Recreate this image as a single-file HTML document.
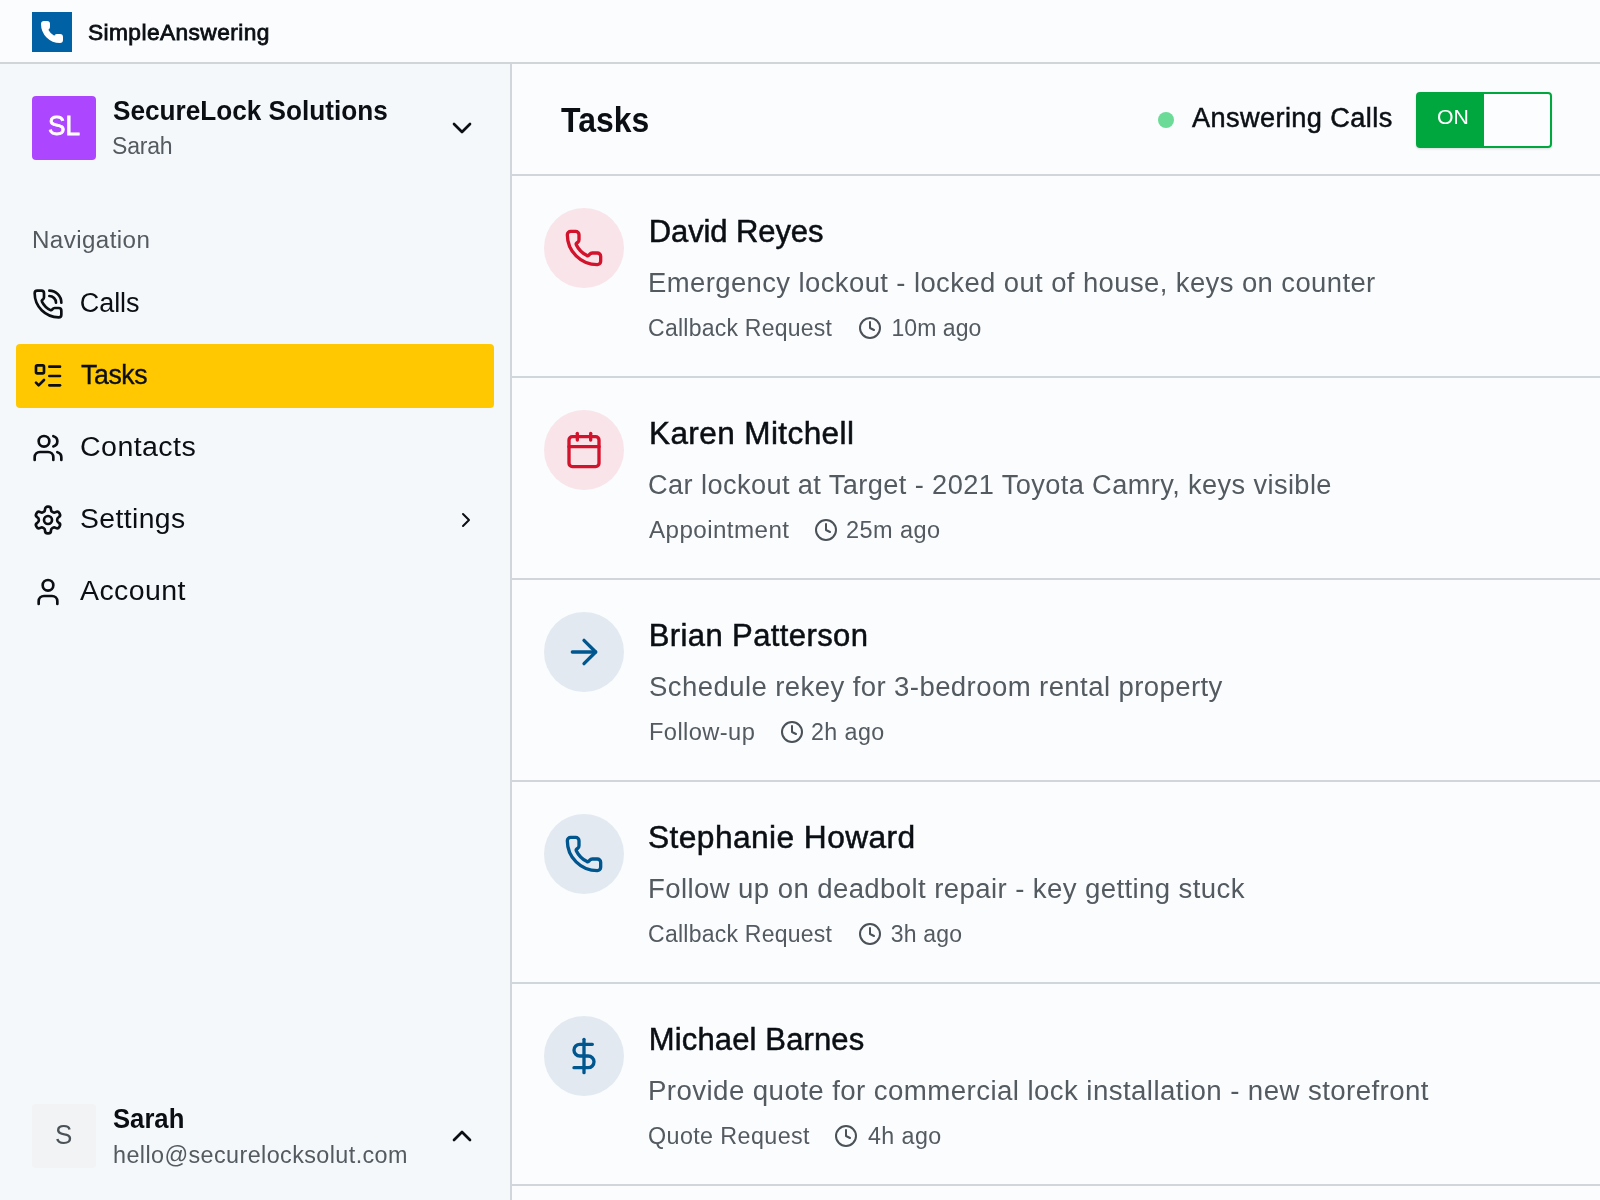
<!DOCTYPE html>
<html lang="en">
<head>
<meta charset="utf-8">
<title>SimpleAnswering - Tasks</title>
<style>
*{box-sizing:border-box;margin:0;padding:0}
html,body{width:1600px;height:1200px;overflow:hidden}
body{font-family:"Liberation Sans",sans-serif;background:#fafcfe;color:#0b0f14;position:relative}
svg{display:block}
#top,#side,#main{will-change:transform}
.ic{fill:none;stroke:currentColor;stroke-width:2;stroke-linecap:round;stroke-linejoin:round}
.abs{position:absolute;white-space:nowrap;line-height:1;transform-origin:0 50%}

/* top bar */
#top{position:absolute;left:0;top:0;width:1600px;height:64px;background:#fafcfe;border-bottom:2px solid #d1d5d8}
#logo{position:absolute;left:32px;top:12px;width:40px;height:40px;background:#0061a4}
#logo svg{position:absolute;left:8px;top:8px;width:24px;height:24px;fill:#fff;stroke:#fff;stroke-width:2;stroke-linejoin:round;stroke-linecap:round}
#brand{left:88px;top:19px;font-size:22.5px;font-weight:400;color:#0b0f14;-webkit-text-stroke:0.8px #0b0f14}

/* sidebar */
#side{position:absolute;left:0;top:64px;width:512px;height:1136px;background:#f4f8fb;border-right:2px solid #d1d5dc}
#orgav{position:absolute;left:32px;top:32px;width:64px;height:64px;border-radius:4px;background:#ad46ff;color:#fff}
#orgavt{left:16px;top:20px;font-size:28px;font-weight:400;-webkit-text-stroke:0.8px #fff}
#orgname{left:112px;top:33px;font-size:28px;font-weight:700;color:#0b0f14}
#orguser{left:112px;top:70px;font-size:23px;color:#535a60}
#chevd{position:absolute;left:446px;top:48px;width:32px;height:32px;color:#0b0f14}
#navlabel{left:32px;top:165px;font-size:23px;color:#535a60}
.nav{position:absolute;left:16px;width:478px;height:64px;border-radius:4px;color:#0b0f14}
.nav.on{background:#ffc800}
.nav svg.ni{position:absolute;left:16px;top:16px;width:32px;height:32px}
.nav .t{left:64px;top:18px;font-size:27px}
.nav.on .t{-webkit-text-stroke:0.35px #0b0f14}
.nav svg.chev{position:absolute;left:438px;top:20px;width:24px;height:24px}
#uav{position:absolute;left:32px;top:1040px;width:64px;height:64px;border-radius:4px;background:#f1f3f5;color:#4a5157}
#uavt{left:24px;top:19px;font-size:27px}
#uname{left:112px;top:1041px;font-size:28px;font-weight:700;color:#0b0f14}
#umail{left:112px;top:1078px;font-size:23px;color:#535a60}
#chevu{position:absolute;left:446px;top:1056px;width:32px;height:32px;color:#0b0f14}

/* main */
#main{position:absolute;left:512px;top:64px;width:1088px;height:1136px;background:#fafcfe}
#hdr{position:absolute;left:0;top:0;width:1088px;height:112px;border-bottom:2px solid #d1d5dc}
#title{left:48px;top:38px;font-size:35px;font-weight:700;color:#0b0f14}
#dot{position:absolute;left:646px;top:48px;width:16px;height:16px;border-radius:50%;background:#6bdb97}
#ans{left:679px;top:40px;font-size:27px;color:#0b0f14;-webkit-text-stroke:0.5px #0b0f14}
#tog{position:absolute;left:904px;top:28px;width:136px;height:56px;border-radius:4px;border:2px solid #00a63e;background:linear-gradient(90deg,#00a63e 0,#00a63e 66px,#fcfdfe 66px);box-shadow:0 1px 3px rgba(0,0,0,0.09),0 1px 2px rgba(0,0,0,0.05)}
#ton{left:19px;top:14px;font-size:20px;color:#fff}

.row{position:absolute;left:0;width:1088px;height:202px;border-bottom:2px solid #d1d5dc}
.circ{position:absolute;left:32px;top:32px;width:80px;height:80px;border-radius:50%}
.circ svg{position:absolute;left:20px;top:20px;width:40px;height:40px}
.red{background:#f8e4e9;color:#d3122c}
.blue{background:#e2e9f0;color:#00568f}
.nm{left:136px;top:40px;font-size:31px;color:#0b0f14;-webkit-text-stroke:0.5px #0b0f14}
.ds{left:136px;top:92px;font-size:27px;color:#535a60}
.mt{left:136px;top:139px;font-size:23px;color:#535a60}
.clk{position:absolute;top:140px;width:24px;height:24px;color:#4a5157}
.tm{top:139px;font-size:23px;color:#535a60}













/*fit*/
#brand{left:88.49px;top:22.25px;letter-spacing:0.4px;transform:scaleX(1.0106)}
#orgavt{left:16.04px;top:16.0px;letter-spacing:0px;transform:scaleX(0.935)}
#orgname{left:112.7px;top:32.5px;letter-spacing:0px;transform:scaleX(0.9343)}
#orguser{left:112px;top:71.3px;letter-spacing:-0.196px}
#navlabel{left:32.45px;top:164.5px;letter-spacing:0.4px;transform:scaleX(1.0499)}
#n0{left:63.85px;top:17.5px;letter-spacing:-0.09px}
#n1{left:65.42px;top:17.5px;letter-spacing:-0.4px;transform:scaleX(0.9886)}
#n2{left:63.79px;top:17.5px;letter-spacing:0.4px;transform:scaleX(1.0584)}
#n3{left:63.8px;top:17.5px;letter-spacing:0.4px;transform:scaleX(1.0475)}
#n4{left:64.2px;top:17.5px;letter-spacing:0.4px;transform:scaleX(1.0557)}
#uavt{left:23.24px;top:17.5px;letter-spacing:0px;transform:scaleX(0.9625)}
#uname{left:113.2px;top:1040.6px;letter-spacing:0px;transform:scaleX(0.9164)}
#umail{left:113.08px;top:1080.4px;letter-spacing:0.4px;transform:scaleX(1.0158)}
#title{left:49px;top:37.75px;letter-spacing:0px;transform:scaleX(0.9124)}
#ans{left:679.6px;top:40.9px;letter-spacing:0.4px;transform:scaleX(1.0054)}
#ton{left:18.6px;top:13.0px;letter-spacing:0px;transform:scaleX(1.0646)}
#nm0{left:136.75px;top:40.0px;letter-spacing:-0.099px}
#ds0{left:136.47px;top:93.5px;letter-spacing:0.4px;transform:scaleX(1.0166)}
#mt0{left:136.1px;top:141.25px;letter-spacing:0.235px}
#tm0{left:379.5px;top:141.25px;letter-spacing:0.047px}
#nm1{left:136.72px;top:40.0px;letter-spacing:0.4px;transform:scaleX(1.0165)}
#ds1{left:136.09px;top:93.5px;letter-spacing:0.4px;transform:scaleX(1.0067)}
#mt1{left:136.85px;top:141.25px;letter-spacing:0.4px;transform:scaleX(1.0516)}
#tm1{left:334.08px;top:141.25px;letter-spacing:0.4px;transform:scaleX(1.0226)}
#nm2{left:136.75px;top:40.0px;letter-spacing:0.398px}
#ds2{left:136.58px;top:93.5px;letter-spacing:0.4px;transform:scaleX(1.0203)}
#mt2{left:137.47px;top:141.25px;letter-spacing:0.4px;transform:scaleX(1.0286)}
#tm2{left:299.09px;top:141.25px;letter-spacing:0.4px;transform:scaleX(1.012)}
#nm3{left:136.33px;top:40.0px;letter-spacing:0.4px;transform:scaleX(1.0235)}
#ds3{left:136.46px;top:93.5px;letter-spacing:0.4px;transform:scaleX(1.0204)}
#mt3{left:136.1px;top:141.25px;letter-spacing:0.235px}
#tm3{left:378.85px;top:141.25px;letter-spacing:0.169px}
#nm4{left:136.75px;top:40.0px;letter-spacing:0.142px}
#ds4{left:136.45px;top:93.5px;letter-spacing:0.4px;transform:scaleX(1.0248)}
#mt4{left:135.84px;top:141.25px;letter-spacing:0.4px;transform:scaleX(1.0128)}
#tm4{left:355.6px;top:141.25px;letter-spacing:0.4px;transform:scaleX(1.0118)}
/*endfit*/
</style>
</head>
<body>

<div id="top">
  <div id="logo">
    <svg viewBox="0 0 24 24"><path d="M13.832 16.568a1 1 0 0 0 1.213-.303l.355-.465A2 2 0 0 1 17 15h3a2 2 0 0 1 2 2v3a2 2 0 0 1-2 2A18 18 0 0 1 2 4a2 2 0 0 1 2-2h3a2 2 0 0 1 2 2v3a2 2 0 0 1-.8 1.6l-.468.351a1 1 0 0 0-.292 1.233 14 14 0 0 0 6.392 6.384"/></svg>
  </div>
  <div id="brand" class="abs">SimpleAnswering</div>
</div>

<div id="side">
  <div id="orgav"><span id="orgavt" class="abs">SL</span></div>
  <div id="orgname" class="abs">SecureLock Solutions</div>
  <div id="orguser" class="abs">Sarah</div>
  <svg id="chevd" class="ic" viewBox="0 0 24 24"><path d="m6 9 6 6 6-6"/></svg>

  <div id="navlabel" class="abs">Navigation</div>

  <div class="nav" style="top:208px">
    <svg class="ni ic" viewBox="0 0 24 24"><path d="M13 2a9 9 0 0 1 9 9"/><path d="M13 6a5 5 0 0 1 5 5"/><path d="M13.832 16.568a1 1 0 0 0 1.213-.303l.355-.465A2 2 0 0 1 17 15h3a2 2 0 0 1 2 2v3a2 2 0 0 1-2 2A18 18 0 0 1 2 4a2 2 0 0 1 2-2h3a2 2 0 0 1 2 2v3a2 2 0 0 1-.8 1.6l-.468.351a1 1 0 0 0-.292 1.233 14 14 0 0 0 6.392 6.384"/></svg>
    <div id="n0" class="t abs">Calls</div>
  </div>
  <div class="nav on" style="top:280px">
    <svg class="ni ic" viewBox="0 0 24 24"><rect x="3" y="4" width="6" height="6" rx="1"/><path d="m3 17 2 2 4-4"/><path d="M13 5h8"/><path d="M13 12h8"/><path d="M13 19h8"/></svg>
    <div id="n1" class="t abs">Tasks</div>
  </div>
  <div class="nav" style="top:352px">
    <svg class="ni ic" viewBox="0 0 24 24"><path d="M16 21v-2a4 4 0 0 0-4-4H6a4 4 0 0 0-4 4v2"/><circle cx="9" cy="7" r="4"/><path d="M22 21v-2a4 4 0 0 0-3-3.87"/><path d="M16 3.13a4 4 0 0 1 0 7.75"/></svg>
    <div id="n2" class="t abs">Contacts</div>
  </div>
  <div class="nav" style="top:424px">
    <svg class="ni ic" viewBox="0 0 24 24"><path d="M12.22 2h-.44a2 2 0 0 0-2 2v.18a2 2 0 0 1-1 1.73l-.43.25a2 2 0 0 1-2 0l-.15-.08a2 2 0 0 0-2.73.73l-.22.38a2 2 0 0 0 .73 2.73l.15.1a2 2 0 0 1 1 1.72v.51a2 2 0 0 1-1 1.74l-.15.09a2 2 0 0 0-.73 2.73l.22.38a2 2 0 0 0 2.73.73l.15-.08a2 2 0 0 1 2 0l.43.25a2 2 0 0 1 1 1.73V20a2 2 0 0 0 2 2h.44a2 2 0 0 0 2-2v-.18a2 2 0 0 1 1-1.73l.43-.25a2 2 0 0 1 2 0l.15.08a2 2 0 0 0 2.73-.73l.22-.39a2 2 0 0 0-.73-2.73l-.15-.08a2 2 0 0 1-1-1.74v-.5a2 2 0 0 1 1-1.74l.15-.09a2 2 0 0 0 .73-2.73l-.22-.38a2 2 0 0 0-2.73-.73l-.15.08a2 2 0 0 1-2 0l-.43-.25a2 2 0 0 1-1-1.73V4a2 2 0 0 0-2-2z"/><circle cx="12" cy="12" r="3"/></svg>
    <div id="n3" class="t abs">Settings</div>
    <svg class="chev ic" viewBox="0 0 24 24"><path d="m9 18 6-6-6-6"/></svg>
  </div>
  <div class="nav" style="top:496px">
    <svg class="ni ic" viewBox="0 0 24 24"><path d="M19 21v-2a4 4 0 0 0-4-4H9a4 4 0 0 0-4 4v2"/><circle cx="12" cy="7" r="4"/></svg>
    <div id="n4" class="t abs">Account</div>
  </div>

  <div id="uav"><span id="uavt" class="abs">S</span></div>
  <div id="uname" class="abs">Sarah</div>
  <div id="umail" class="abs">hello@securelocksolut.com</div>
  <svg id="chevu" class="ic" viewBox="0 0 24 24"><path d="m18 15-6-6-6 6"/></svg>
</div>

<div id="main">
  <div id="hdr">
    <div id="title" class="abs">Tasks</div>
    <div id="dot"></div>
    <div id="ans" class="abs">Answering Calls</div>
    <div id="tog"><div id="ton" class="abs">ON</div></div>
  </div>

  <div class="row" style="top:112px">
    <div class="circ red"><svg class="ic" viewBox="0 0 24 24"><path d="M13.832 16.568a1 1 0 0 0 1.213-.303l.355-.465A2 2 0 0 1 17 15h3a2 2 0 0 1 2 2v3a2 2 0 0 1-2 2A18 18 0 0 1 2 4a2 2 0 0 1 2-2h3a2 2 0 0 1 2 2v3a2 2 0 0 1-.8 1.6l-.468.351a1 1 0 0 0-.292 1.233 14 14 0 0 0 6.392 6.384"/></svg></div>
    <div id="nm0" class="nm abs">David Reyes</div>
    <div id="ds0" class="ds abs">Emergency lockout - locked out of house, keys on counter</div>
    <div id="mt0" class="mt abs">Callback Request</div>
    <svg id="ck0" class="clk ic" style="left:346px" viewBox="0 0 24 24"><circle cx="12" cy="12" r="10"/><polyline points="12 6 12 12 16 14"/></svg>
    <div id="tm0" class="tm abs">10m ago</div>
  </div>

  <div class="row" style="top:314px">
    <div class="circ red"><svg class="ic" viewBox="0 0 24 24"><path d="M8 2v4"/><path d="M16 2v4"/><rect width="18" height="18" x="3" y="4" rx="2"/><path d="M3 10h18"/></svg></div>
    <div id="nm1" class="nm abs">Karen Mitchell</div>
    <div id="ds1" class="ds abs">Car lockout at Target - 2021 Toyota Camry, keys visible</div>
    <div id="mt1" class="mt abs">Appointment</div>
    <svg id="ck1" class="clk ic" style="left:302px" viewBox="0 0 24 24"><circle cx="12" cy="12" r="10"/><polyline points="12 6 12 12 16 14"/></svg>
    <div id="tm1" class="tm abs">25m ago</div>
  </div>

  <div class="row" style="top:516px">
    <div class="circ blue"><svg class="ic" viewBox="0 0 24 24"><path d="M5 12h14"/><path d="m12 5 7 7-7 7"/></svg></div>
    <div id="nm2" class="nm abs">Brian Patterson</div>
    <div id="ds2" class="ds abs">Schedule rekey for 3-bedroom rental property</div>
    <div id="mt2" class="mt abs">Follow-up</div>
    <svg id="ck2" class="clk ic" style="left:268px" viewBox="0 0 24 24"><circle cx="12" cy="12" r="10"/><polyline points="12 6 12 12 16 14"/></svg>
    <div id="tm2" class="tm abs">2h ago</div>
  </div>

  <div class="row" style="top:718px">
    <div class="circ blue"><svg class="ic" viewBox="0 0 24 24"><path d="M13.832 16.568a1 1 0 0 0 1.213-.303l.355-.465A2 2 0 0 1 17 15h3a2 2 0 0 1 2 2v3a2 2 0 0 1-2 2A18 18 0 0 1 2 4a2 2 0 0 1 2-2h3a2 2 0 0 1 2 2v3a2 2 0 0 1-.8 1.6l-.468.351a1 1 0 0 0-.292 1.233 14 14 0 0 0 6.392 6.384"/></svg></div>
    <div id="nm3" class="nm abs">Stephanie Howard</div>
    <div id="ds3" class="ds abs">Follow up on deadbolt repair - key getting stuck</div>
    <div id="mt3" class="mt abs">Callback Request</div>
    <svg id="ck3" class="clk ic" style="left:346px" viewBox="0 0 24 24"><circle cx="12" cy="12" r="10"/><polyline points="12 6 12 12 16 14"/></svg>
    <div id="tm3" class="tm abs">3h ago</div>
  </div>

  <div class="row" style="top:920px">
    <div class="circ blue"><svg class="ic" viewBox="0 0 24 24"><line x1="12" x2="12" y1="2" y2="22"/><path d="M17 5H9.5a3.5 3.5 0 0 0 0 7h5a3.5 3.5 0 0 1 0 7H6"/></svg></div>
    <div id="nm4" class="nm abs">Michael Barnes</div>
    <div id="ds4" class="ds abs">Provide quote for commercial lock installation - new storefront</div>
    <div id="mt4" class="mt abs">Quote Request</div>
    <svg id="ck4" class="clk ic" style="left:322px" viewBox="0 0 24 24"><circle cx="12" cy="12" r="10"/><polyline points="12 6 12 12 16 14"/></svg>
    <div id="tm4" class="tm abs">4h ago</div>
  </div>
</div>

</body>
</html>
